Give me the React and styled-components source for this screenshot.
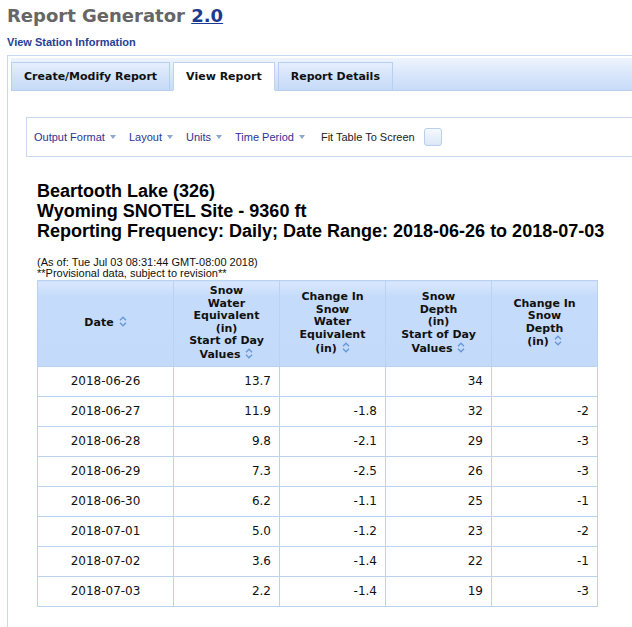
import React from "react";
import styled, { createGlobalStyle } from "styled-components";

const GlobalStyle = createGlobalStyle`
  html, body { margin: 0; padding: 0; background: #fff; }
  body { overflow: hidden; font-family: "DejaVu Sans", Verdana, sans-serif; }
`;

const Page = styled.div`
  padding-left: 7px;
  height: 627px;
  overflow: hidden;
`;

const Title = styled.h1`
  margin: 5px 0 0 0;
  font-family: "DejaVu Sans", Verdana, sans-serif;
  font-weight: bold;
  font-size: 18px;
  line-height: 22px;
  color: #666;
`;

const VersionLink = styled.a`
  color: #1b3c8e;
  text-decoration: underline;
`;

const StationLink = styled.a`
  display: block;
  margin-top: 9px;
  font-family: "Liberation Sans", Arial, sans-serif;
  font-weight: bold;
  font-size: 11px;
  line-height: 13px;
  color: #1f4196;
  text-decoration: none;
`;

const Panel = styled.div`
  margin-top: 6px;
  margin-right: -60px;
  border: 1px solid #c6d9f3;
  border-right: none;
  padding: 2px 0 0 3px;
  min-height: 620px;
`;

const TabStrip = styled.div`
  display: flex;
  align-items: flex-end;
  gap: 3px;
  padding-top: 4px;
  background: linear-gradient(#eef4fd, #dbe8fb 45%, #c8dbf7);
  border-bottom: 1px solid #b8cfef;
`;

const Tab = styled.div`
  box-sizing: border-box;
  height: 29px;
  margin-bottom: -1px;
  padding: 0 12px;
  border: 1px solid ${(p) => (p.$active ? "#bfd3f1" : "#b9cff0")};
  border-bottom-color: ${(p) => (p.$active ? "#fff" : "#b8cfef")};
  background: ${(p) =>
    p.$active ? "#fff" : "linear-gradient(#e6effc, #d3e3fa 50%, #c6daf8)"};
  font-family: "DejaVu Sans", Verdana, sans-serif;
  font-weight: bold;
  font-size: 11px;
  line-height: 27px;
  color: #111;
  white-space: nowrap;
`;

const Content = styled.div`
  padding: 26px 0 0 15px;
`;

const Toolbar = styled.div`
  box-sizing: border-box;
  height: 40px;
  display: flex;
  align-items: center;
  padding-left: 7px;
  border: 1px solid #c7d9f1;
  border-right: none;
  font-family: "Liberation Sans", Arial, sans-serif;
  font-size: 11px;
`;

const Menu = styled.span`
  display: inline-flex;
  align-items: center;
  gap: 5px;
  margin-right: 13px;
  color: #2d3391;
  white-space: nowrap;
`;

const Caret = styled.span`
  width: 0;
  height: 0;
  border-left: 3.5px solid transparent;
  border-right: 3.5px solid transparent;
  border-top: 4px solid #8da8ca;
`;

const FitLabel = styled.span`
  margin-left: 3px;
  color: #222;
  white-space: nowrap;
`;

const CheckBox = styled.span`
  box-sizing: border-box;
  width: 18px;
  height: 18px;
  margin-left: 9px;
  border: 1px solid #b8ceee;
  border-radius: 3px;
  background: linear-gradient(#f6f9fe, #dbe7f8);
`;

const Report = styled.div`
  margin-left: 11px;
`;

const Heading = styled.h2`
  margin: 24px 0 0 0;
  font-family: "Liberation Sans", Arial, sans-serif;
  font-weight: bold;
  font-size: 18px;
  line-height: 20px;
  color: #000;
`;

const Note = styled.div`
  margin-top: 16px;
  font-family: "Liberation Sans", Arial, sans-serif;
  font-size: 11px;
  line-height: 11px;
  color: #111;
`;

const Table = styled.table`
  margin-top: 1px;
  border-collapse: collapse;
  table-layout: fixed;
  width: 561px;
  font-family: "DejaVu Sans", Verdana, sans-serif;
`;

const Th = styled.th`
  height: 74px;
  padding: 4px 3px;
  border: 1px solid #bcd2f1;
  background: linear-gradient(#d9e8fd, #c5dbfb 18%, #c4dafb);
  font-size: 11px;
  font-weight: bold;
  line-height: 12.6px;
  color: #111;
  text-align: center;
  vertical-align: middle;
`;

const Td = styled.td`
  height: 29px;
  padding: 0 8px;
  border: 1px solid #bcd2f1;
  font-size: 12px;
  color: #111;
  text-align: ${(p) => (p.$center ? "center" : "right")};
  vertical-align: middle;
`;

const SortIconSvg = styled.svg`
  margin-left: 5px;
  vertical-align: -1px;
`;

const SortIcon = () => (
  <SortIconSvg width="8" height="11" viewBox="0 0 8 11">
    <path
      d="M1 4.2 L4 1.2 L7 4.2 M1 6.8 L4 9.8 L7 6.8"
      fill="none"
      stroke="#6497d6"
      strokeWidth="1.3"
    />
  </SortIconSvg>
);

const rows = [
  ["2018-06-26", "13.7", "", "34", ""],
  ["2018-06-27", "11.9", "-1.8", "32", "-2"],
  ["2018-06-28", "9.8", "-2.1", "29", "-3"],
  ["2018-06-29", "7.3", "-2.5", "26", "-3"],
  ["2018-06-30", "6.2", "-1.1", "25", "-1"],
  ["2018-07-01", "5.0", "-1.2", "23", "-2"],
  ["2018-07-02", "3.6", "-1.4", "22", "-1"],
  ["2018-07-03", "2.2", "-1.4", "19", "-3"],
];

export default function App() {
  return (
    <>
      <GlobalStyle />
      <Page>
        <Title>
          Report Generator <VersionLink href="#">2.0</VersionLink>
        </Title>
        <StationLink href="#">View Station Information</StationLink>
        <Panel>
          <TabStrip>
            <Tab>Create/Modify Report</Tab>
            <Tab $active>View Report</Tab>
            <Tab>Report Details</Tab>
          </TabStrip>
          <Content>
            <Toolbar>
              <Menu>
                Output Format <Caret />
              </Menu>
              <Menu>
                Layout <Caret />
              </Menu>
              <Menu>
                Units <Caret />
              </Menu>
              <Menu>
                Time Period <Caret />
              </Menu>
              <FitLabel>Fit Table To Screen</FitLabel>
              <CheckBox />
            </Toolbar>
            <Report>
              <Heading>
                Beartooth Lake (326)
                <br />
                Wyoming SNOTEL Site - 9360 ft
                <br />
                Reporting Frequency: Daily; Date Range: 2018-06-26 to 2018-07-03
              </Heading>
              <Note>
                (As of: Tue Jul 03 08:31:44 GMT-08:00 2018)
                <br />
                **Provisional data, subject to revision**
              </Note>
              <Table>
                <colgroup>
                  <col style={{ width: 136 }} />
                  <col style={{ width: 106 }} />
                  <col style={{ width: 106 }} />
                  <col style={{ width: 106 }} />
                  <col style={{ width: 106 }} />
                </colgroup>
                <thead>
                  <tr>
                    <Th>
                      Date
                      <SortIcon />
                    </Th>
                    <Th>
                      Snow
                      <br />
                      Water
                      <br />
                      Equivalent
                      <br />
                      (in)
                      <br />
                      Start of Day
                      <br />
                      Values
                      <SortIcon />
                    </Th>
                    <Th>
                      Change In
                      <br />
                      Snow
                      <br />
                      Water
                      <br />
                      Equivalent
                      <br />
                      (in)
                      <SortIcon />
                    </Th>
                    <Th>
                      Snow
                      <br />
                      Depth
                      <br />
                      (in)
                      <br />
                      Start of Day
                      <br />
                      Values
                      <SortIcon />
                    </Th>
                    <Th>
                      Change In
                      <br />
                      Snow
                      <br />
                      Depth
                      <br />
                      (in)
                      <SortIcon />
                    </Th>
                  </tr>
                </thead>
                <tbody>
                  {rows.map((r) => (
                    <tr key={r[0]}>
                      <Td $center>{r[0]}</Td>
                      <Td>{r[1]}</Td>
                      <Td>{r[2]}</Td>
                      <Td>{r[3]}</Td>
                      <Td>{r[4]}</Td>
                    </tr>
                  ))}
                </tbody>
              </Table>
            </Report>
          </Content>
        </Panel>
      </Page>
    </>
  );
}
